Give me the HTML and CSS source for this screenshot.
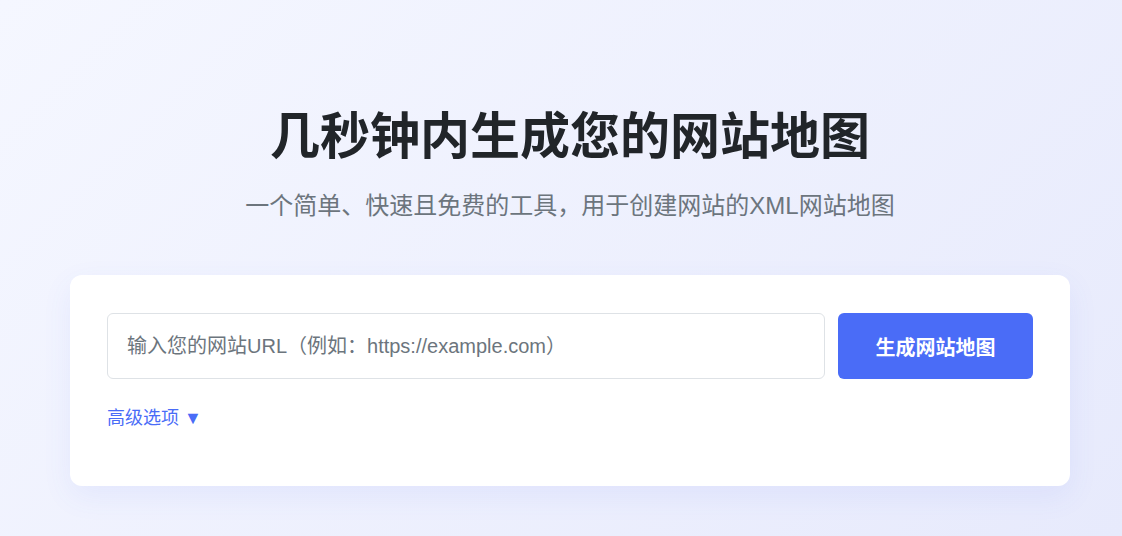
FILE: index.html
```html
<!DOCTYPE html>
<html lang="zh-CN">
<head>
    <meta charset="UTF-8">
    <meta name="viewport" content="width=device-width, initial-scale=1.0">
    <title>网站地图生成器</title>
    <link rel="stylesheet" href="styles.css">
</head>
<body>

    <div class="container">
        <!-- Hero -->
        <header class="hero">
            <h1>几秒钟内生成您的网站地图</h1>
            <p class="subtitle">一个简单、快速且免费的工具，用于创建网站的XML网站地图</p>
        </header>

        <!-- Generator card -->
        <div class="card">
            <div class="url-row">
                <input type="text" id="siteUrl" placeholder="输入您的网站URL（例如：https://example.com）">
                <button class="generate-btn">生成网站地图</button>
            </div>
            <a href="#" class="advanced-toggle">高级选项 <span class="arrow">▼</span></a>
        </div>
    </div>

</body>
</html>
```

FILE: styles.css
```css
* {
    box-sizing: border-box;
}

body {
    margin: 0;
    padding-left: 18px;
    min-height: 100vh;
    font-family: "Liberation Sans", Arial, "Noto Sans CJK SC", sans-serif;
    background: linear-gradient(135deg, #f5f7ff 0%, #e7eafc 100%);
    color: #212529;
}

.container {
    max-width: 1000px;
    margin: 0 auto;
    padding-top: 107px;
}

.hero {
    text-align: center;
    margin-bottom: 53px;
}

.hero h1 {
    font-size: 50px;
    font-weight: 700;
    line-height: 60px;
    margin: 0 0 23px;
    color: #212529;
}

.subtitle {
    font-size: 24px;
    line-height: 32px;
    margin: 0;
    color: #6c757d;
}

.card {
    background-color: white;
    border-radius: 12px;
    padding: 38px 37px 56px;
    box-shadow: 0 10px 30px rgba(74, 108, 247, 0.08);
}

.url-row {
    display: flex;
    gap: 13px;
}

.url-row input {
    flex: 1;
    height: 66px;
    padding: 0 19px;
    border: 1px solid #dee2e6;
    border-radius: 6px;
    font-family: inherit;
    font-size: 20px;
    color: #212529;
    outline: none;
}

.url-row input::placeholder {
    color: #6c757d;
}

.generate-btn {
    width: 195px;
    height: 66px;
    border: none;
    border-radius: 6px;
    background-color: #4a6cf7;
    color: white;
    font-family: inherit;
    font-size: 20px;
    font-weight: 700;
    cursor: pointer;
}

.generate-btn:hover {
    background-color: #3b5de7;
}

.advanced-toggle {
    display: inline-block;
    margin-top: 27px;
    font-size: 18px;
    line-height: 24px;
    color: #4a6cf7;
    text-decoration: none;
}

.arrow {
    font-size: 18px;
}
```
